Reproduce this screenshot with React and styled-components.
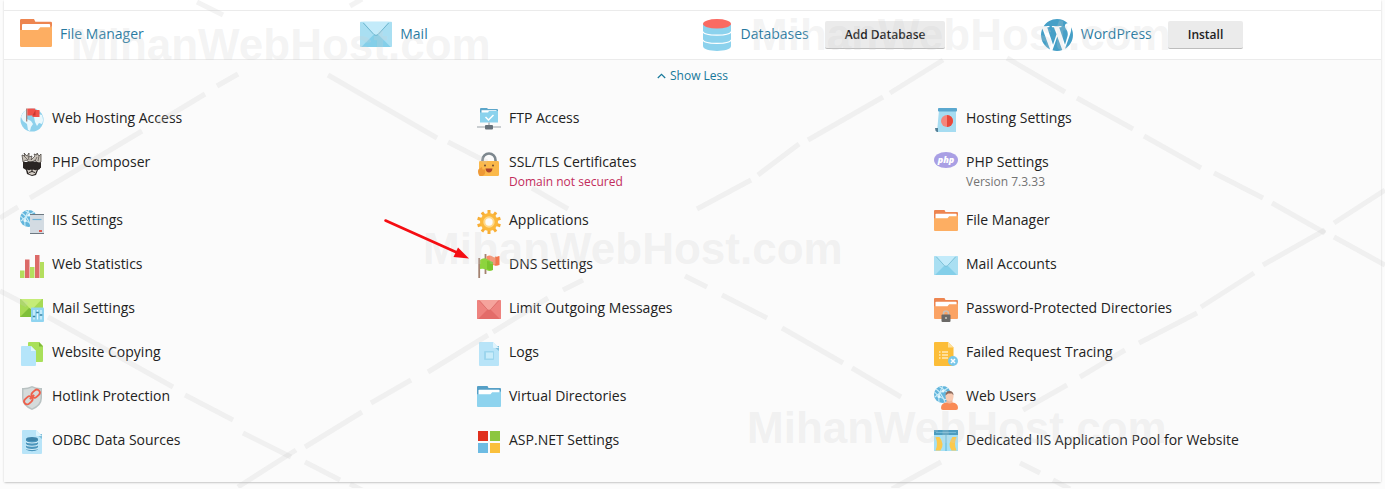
import React, { useState } from 'react'
import styled, { createGlobalStyle } from 'styled-components'

const GlobalStyle = createGlobalStyle`
    * {
        box-sizing: border-box;
    }

    body {
        margin: 0;
        background: #fcfcfc;
        color: #222;
        font-family: "Open Sans", "Noto Sans", sans-serif;
        font-size: 14px;
        line-height: 20px;
    }
`;

const Page = styled.main`
    position: relative;
    padding: 0 4px 6px;
    overflow: hidden;
`;

const Card = styled.section`
    padding-top: 10px;
    background: #fff;
    border-radius: 0 0 2px 2px;
    box-shadow: 0 1px 2px rgba(0, 0, 0, 0.22);
`;

const Toolbar = styled.div`
    display: grid;
    grid-template-columns: repeat(4, 1fr);
    column-gap: 16px;
    padding: 8px 16px;
    border-top: 1px solid #ebebeb;
    border-bottom: 1px solid #ebebeb;
`;

const ToolbarItem = styled.div`
    display: flex;
    align-items: center;
    gap: 16px;
    white-space: nowrap;
`;

const ToolbarLink = styled.a`
    display: flex;
    align-items: center;
    gap: 8px;
    color: #28799f;
    text-decoration: none;
`;

const ToolbarText = styled.span`
    padding-bottom: 2px;
`;

const ToolButton = styled.button`
    height: 28px;
    padding: 0 20px;
    border: 0;
    border-bottom: 1px solid #bdbdbd;
    border-radius: 2px;
    background: #ebebeb;
    color: #222;
    font: 600 12px "Open Sans", sans-serif;
`;

const Panel = styled.div`
    padding: 6px 16px 28px;
    background: #fbfbfb;
`;

const ToggleButton = styled.button`
    display: flex;
    align-items: center;
    gap: 4px;
    margin: 0 auto;
    padding: 0;
    border: 0;
    background: none;
    color: #16789a;
    font: 12px/20px "Open Sans", sans-serif;
`;

const Tools = styled.div`
    display: grid;
    grid-template-columns: repeat(3, 1fr);
    gap: 20px 26px;
    margin-top: 22px;
`;

const Tool = styled.a`
    display: flex;
    align-items: flex-start;
    gap: 8px;
    color: #222;
    text-decoration: none;
`;

const ToolTitle = styled.span`
    display: block;
`;

const ToolNote = styled.span`
    display: block;
    padding-top: 1px;
    font-size: 12px;
    line-height: 17px;
    color: ${(props) => (props.$danger ? '#c22c5c' : '#737373')};
`;

const IconSvg = styled.svg`
    display: block;
    flex: none;
`;

const Overlay = styled.svg`
    position: absolute;
    top: 0;
    left: 0;
    pointer-events: none;
`;

const Icon = ({ size = 24, children }) => (
    <IconSvg width={size} height={size} viewBox="0 0 24 24" aria-hidden="true">{children}</IconSvg>
)

const Folder = ({ size, back = '#ed8550', front = '#fdae62', children }) => (
    <Icon size={size}>
        <path d="M0 1q0-1 1-1h9.500l1 2H23q1 0 1 1v9H0z" fill={back} />
        <path d="M1.500 4.500q0-.8.800-.8h19.500q.8 0 .8.800V9H1.500z" fill="#fff" />
        <path d="M0 8.200h13.500l1.700-2H23l1-1.200v15q0 1-1 1H1q-1 0-1-1z" fill={front} />
        {children}
    </Icon>
)

const Envelope = ({ size, base = '#a9dff2', flap = '#c3ebfa', low = '#84cfe9', line = '#6db4cb', children }) => (
    <Icon size={size}>
        <rect y="2" width="24" height="19" rx=".6" fill={base} />
        <path d="M1 21l9-9h4l9 9z" fill={low} />
        <path d="M2.500 2h19l-8 9.500q-1.500 1.300-3 0z" fill={flap} />
        <path d="M2.500 3l8 8.700q1.500 1.200 3 0l8-8.700" fill="none" stroke={line} strokeWidth=".7" />
        {children}
    </Icon>
)

const Globe = () => (
    <>
        <circle cx="12" cy="12" r="11.500" fill="#8dd1ec" />
        <path d="M1 9q2-6 7-8l3 1-1 4-4 2 1 3 4 2 2 3-2 3-1 4-2-1-1-6-4-3z" fill="#eaf8fd" />
        <path d="M14 9l4-3 4 1q2 5 0 9l-3-1-2 3-2-4z" fill="#eaf8fd" />
    </>
)

const WireGlobe = () => (
    <>
        <circle cx="8.500" cy="8.500" r="8.500" fill="#62b5dc" />
        <path d="M2 3q5 3 9 13M14 2q-8 4-13 9M5 .5q8 4 11.500 11M.5 6q6 7 14 8M9 0q-5 8-4 16" fill="none" stroke="#c9ecf8" strokeWidth="1.100" />
        <circle cx="9" cy="5" r="1.600" fill="#e6f7fd" />
        <circle cx="5" cy="10.500" r="1.600" fill="#e6f7fd" />
    </>
)

const Sheet = ({ fill = '#b8e4f8', fold = '#7fbfdb', children }) => (
    <Icon>
        <path d="M2 1q0-1 1-1h13l6 6v17q0 1-1 1H3q-1 0-1-1z" fill={fill} />
        <path d="M16 4h6v5z" fill={fold} />
        <path d="M16 0l6 6h-5q-1 0-1-1z" fill="#dff4fd" />
        {children}
    </Icon>
)

const DatabaseIcon = ({ size }) => (
    <IconSvg width={size} height={size} viewBox="0 0 32 32" aria-hidden="true">
        <path d="M2 5v22c0 6.500 28 6.500 28 0V5z" fill="#8cd2ed" />
        <ellipse cx="16" cy="4.800" rx="14" ry="4.800" fill="#fa6a62" />
        <path d="M2 12.500c0 4.800 28 4.800 28 0M2 20.800c0 4.800 28 4.800 28 0" fill="none" stroke="#fff" strokeWidth="1.100" />
    </IconSvg>
)

const WordPressIcon = ({ size }) => (
    <IconSvg width={size} height={size} viewBox="43 43 426 426" fill="#459fc7" aria-hidden="true">
        <path d="M61.700 169.400l101.500 278C92.200 413 43.300 340.200 43.300 256c0-30.900 6.600-60.100 18.400-86.600z" />
        <path d="M399.600 245.300c0-26.300-9.400-44.500-17.500-58.700-10.800-17.500-20.900-32.400-20.900-49.900 0-19.600 14.800-37.800 35.700-37.800.9 0 1.800.1 2.800.2-37.900-34.700-88.300-55.900-143.700-55.900-74.300 0-139.700 38.100-177.800 95.900 5 .2 9.700.3 13.700.3 22.200 0 56.700-2.700 56.700-2.700 11.500-.7 12.800 16.200 1.400 17.500 0 0-11.500 1.300-24.300 2l77.500 230.400L249.800 247l-33.100-90.800c-11.500-.7-22.300-2-22.300-2-11.500-.7-10.100-18.200 1.300-17.500 0 0 35.100 2.700 56 2.700 22.200 0 56.700-2.700 56.700-2.700 11.500-.7 12.800 16.200 1.400 17.500 0 0-11.500 1.300-24.300 2l76.900 228.700 21.200-70.900c9-29.400 16-50.500 16-68.700z" />
        <path d="M259.700 274.600l-63.800 185.500c19.100 5.600 39.200 8.700 60.100 8.700 24.800 0 48.500-4.300 70.600-12.100-.6-.9-1.100-1.900-1.500-2.900z" />
        <path d="M442.700 153.900c.9 6.800 1.400 14 1.400 21.900 0 21.600-4 45.800-16.200 76.200l-65 187.900C426.200 403 468.700 334.500 468.700 256c0-37-9.400-71.800-26-102.100z" />
    </IconSvg>
)

const WebAccessIcon = () => (
    <Icon>
        <Globe />
        <path d="M6.700.5v13" stroke="#9c7d75" strokeWidth="1.200" />
        <path d="M7.300.5h8v1.500h4.200v7h-7V7.500H7.300z" fill="#f0524a" />
        <path d="M12.500 7.500h3V2z" fill="#c93831" />
    </Icon>
)

const FtpIcon = () => (
    <Icon>
        <path d="M3 1q0-1 1-1h6l1 1h9q1 0 1 1v6H3z" fill="#5ca6ca" />
        <path d="M4.500 2.200h15V7h-15z" fill="#fff" />
        <path d="M3 4.500h8l1-1.500h9v11.500H3z" fill="#8bd2ed" />
        <path d="M8.500 9l3 3 5-5" fill="none" stroke="#fff" strokeWidth="1.500" />
        <path d="M12 14.500v3M0 19h24" stroke="#9aa2a8" strokeWidth="1.200" />
        <rect x="8" y="17" width="8" height="4.500" rx="1" fill="#66717a" />
    </Icon>
)

const HostingIcon = () => (
    <Icon>
        <path d="M5 2h17v22H3z" fill="#a6dcf1" />
        <rect x="4" width="19" height="3.500" rx=".8" fill="#5ba8cf" />
        <path d="M1 20h3v4H3q-2-1-2-4z" fill="#547f95" />
        <circle cx="13" cy="13" r="6" fill="#f5857b" />
        <path d="M13 7a6 6 0 0 1 0 12z" fill="#e8483b" />
    </Icon>
)

const ComposerIcon = () => (
    <Icon>
        <path d="M3 10h18l-1 7-2 1-2 5-4 1-5-2-1-4-3-2z" fill="#2a2523" />
        <path d="M2 3l3 1-1-3 3 3 2-3v4l3-1-1 4 4-4-1-2 3 1V1l2 3 2-2v8l-3 2-3-4-4 3-5-3-3 2z" fill="#c9c3ba" stroke="#3a332f" strokeWidth=".7" />
        <path d="M4 4l4 4M17 5l-2 4M19 4l-1 5M8 4l1 4" stroke="#3a332f" strokeWidth=".6" />
        <path d="M3 11q9-3.500 18 0v5q-9-2-18 0z" fill="#2a2523" />
        <path d="M7 17.500q2 1.500 4 0l1 1 1-1q3 1.500 4 0l-2 4.500-3 1-3-1z" fill="#d8d2ca" />
        <path d="M9 20.500q3-2 6 0M12 18v2" stroke="#2a2523" fill="none" />
    </Icon>
)

const LockIcon = () => (
    <Icon>
        <path d="M5.500 11V8a6.500 6.500 0 0 1 13 0v3" fill="none" stroke="#7d878e" strokeWidth="2.600" />
        <rect x="2" y="9" width="20" height="15" rx="1.200" fill="#fbb94b" />
        <circle cx="8" cy="13.500" r="1" fill="#6d4b35" />
        <circle cx="16" cy="13.500" r="1" fill="#6d4b35" />
        <path d="M8.500 16.500h7q-.5 4-3.500 4t-3.500-4z" fill="#a9442c" />
        <path d="M1 19q0-2 1.500-2.500L5 15l.5 2.500H8q1 5-2.500 6.500H3q-2-1-2-5z" fill="#ee9936" />
    </Icon>
)

const PhpIcon = () => (
    <Icon>
        <ellipse cx="12" cy="8" rx="12" ry="8" fill="#a99fe4" />
        <text x="12" y="10.500" textAnchor="middle" fontFamily="Open Sans, sans-serif" fontSize="9" fontWeight="800" fontStyle="italic" fill="#fff">php</text>
    </Icon>
)

const IisIcon = () => (
    <Icon>
        <WireGlobe />
        <rect x="10" y="4" width="14" height="20" rx=".6" fill="#d3dbe2" />
        <path d="M10 4.500h14M10 23.500h14" stroke="#6e7982" />
        <path d="M12.500 9.500h9" stroke="#71b3d8" strokeWidth="1.200" />
        <rect x="19" y="20" width="3" height="2" fill="#e4594f" />
    </Icon>
)

const GearIcon = () => (
    <Icon>
        {[0, 36, 72, 108, 144].map((angle) => (
            <path key={angle} d="M12 0v24" stroke="#f8ae35" strokeWidth="3" transform={`rotate(${angle} 12 12)`} />
        ))}
        <circle cx="12" cy="12" r="9" fill="#fbb83c" />
        <circle cx="12" cy="12" r="4.700" fill="#fbfbfb" stroke="#ffd98c" strokeWidth="2" />
    </Icon>
)

const StatsIcon = () => (
    <Icon>
        <path d="M0 16.500h4.500V24H0zM10 13h4.500v11H10zM20 8h4v16h-4z" fill="#b4de5e" />
        <path d="M5 5.500h4.500V24H5zM15 1h4.500v23H15z" fill="#dc6a68" />
    </Icon>
)

const DnsIcon = () => (
    <Icon>
        <path d="M8.500 0v20M2.200 4v20" stroke="#a38270" strokeWidth="1.800" />
        <path d="M9.500 2.500q3-2 6 0t6.500-.5v9q-3 1.500-6 0t-6.500 0z" fill="#fa8d68" />
        <path d="M18 2.500q3 .5 4.500-.5v9l-4.500.5z" fill="#f4754d" />
        <path d="M3 6q3.500-3 7-1l5.500 3v8q-3 2-6 0t-6.500-1z" fill="#8dd43e" />
        <path d="M10 7l6 1v8q-3 1-6-1z" fill="#79c52d" />
    </Icon>
)

const MailSettingsIcon = () => (
    <Icon>
        <path d="M0 1h23v18H0z" fill="#a6da54" />
        <path d="M0 19L9 10h5l9 9z" fill="#7fbf3a" />
        <path d="M1 1h21l-9 9.500q-1.500 1-3 0z" fill="#c5ec78" />
        <rect x="11" y="9.500" width="13" height="14.500" rx="1" fill="#8fd4f0" />
        <path d="M14 12v9.500M17.500 12v9.500M21 12v9.500" stroke="#e6f8ff" strokeWidth="1.200" />
        <path d="M12.800 18.500h2.500M16.200 14.500h2.600M19.700 17h2.600" stroke="#3b83a5" strokeWidth="1.700" />
    </Icon>
)

const CopyIcon = () => (
    <Icon>
        <path d="M8 1q0-1 1-1h10l4 4v15q0 1-1 1H8z" fill="#a9e05a" />
        <path d="M19 0l4 4.500h-4z" fill="#7fb83a" />
        <path d="M1 5q0-1 1-1h9l5 5v14q0 1-1 1H2q-1 0-1-1z" fill="#b5e5fa" />
        <path d="M11 4l5 5h-5z" fill="#e2f6fe" />
    </Icon>
)

const HotlinkIcon = () => (
    <Icon>
        <path d="M12 0q5 2.500 10 2v10q0 8-10 12Q2 20 2 12V2q5 .5 10-2z" fill="#b9c2c2" />
        <path d="M12 1.500q4 2 8.500 2V12q0 6.500-8.500 10.500Q3.500 18.500 3.500 12V3.500q4.500 0 8.500-2z" fill="#d5dbdb" />
        <g transform="rotate(-42 12 11)" fill="none" stroke="#ee604c" strokeWidth="1.800">
            <rect x="2.500" y="8" width="9" height="6" rx="3" />
            <rect x="12.500" y="8" width="9" height="6" rx="3" />
            <path d="M9 11h6" />
        </g>
    </Icon>
)

const LogsIcon = () => (
    <Sheet>
        <rect x="7" y="9" width="10" height="9" rx="1" fill="#9dd6ee" />
        <rect x="9" y="10.500" width="7" height="6" fill="#c8ecfa" />
    </Sheet>
)

const OdbcIcon = () => (
    <Sheet>
        <path d="M6 9v9.500c0 3.500 12 3.500 12 0V9z" fill="#4b96bd" />
        <ellipse cx="12" cy="9" rx="6" ry="2" fill="#3d83a9" />
        <path d="M6 11c0 2.600 12 2.600 12 0M6 14.300c0 2.600 12 2.600 12 0M6 17.500c0 2.600 12 2.600 12 0" fill="none" stroke="#d4effa" strokeWidth="1.100" />
    </Sheet>
)

const AspIcon = () => (
    <Icon>
        <path d="M1 1h10v10H1z" fill="#e0301e" />
        <path d="M13 1h10v10H13z" fill="#8cc63f" />
        <path d="M1 13h10v10H1z" fill="#6dbbe3" />
        <path d="M13 13h10v10H13z" fill="#fac03c" />
    </Icon>
)

const ProtectedFolderIcon = () => (
    <Folder front="#fba364">
        <path d="M9.500 18v-2.500a2.500 2.500 0 0 1 5 0V18" fill="none" stroke="#c6c0ba" strokeWidth="1.600" />
        <rect x="7.500" y="16.500" width="9" height="7.500" rx="1" fill="#6b6967" />
        <circle cx="12" cy="20" r="1.100" fill="#c6c0ba" />
    </Folder>
)

const TracingIcon = () => (
    <Icon>
        <path d="M0 1q0-1 1-1h13l5.500 5.500V23q0 1-1 1H1q-1 0-1-1z" fill="#fcbd38" />
        <path d="M14 0l5.500 5.500H14z" fill="#ffe09a" />
        <path d="M5 10h1.500M8 10h6M5 13h1.500M8 13h6M5 16h1.500M8 16h6" stroke="#ffe9b8" strokeWidth="1.300" />
        <circle cx="19" cy="19" r="5" fill="#79c7ea" />
        <path d="M17 17l4 4M21 17l-4 4" stroke="#fff" strokeWidth="1.500" />
    </Icon>
)

const WebUsersIcon = () => (
    <Icon>
        <WireGlobe />
        <path d="M12.500 13h6v6h-6z" fill="#efb79c" />
        <ellipse cx="15.500" cy="10.500" rx="4" ry="5" fill="#f9cbb3" />
        <path d="M11.500 9.500q0-4.500 4-4.500t4 4.500L18 7.500h-4z" fill="#8b6a5c" />
        <path d="M7 22q0-5 5.500-5.500 3 2 6 0Q24 17 24 22q0 2-2 2H9q-2 0-2-2z" fill="#f98a55" />
    </Icon>
)

const PoolIcon = () => (
    <Icon>
        <path d="M0 0h24v21H0z" fill="#a6e0f4" />
        <path d="M0 0h24v5H0z" fill="#4c9cc0" />
        <path d="M2 2.500h20" stroke="#76bbd8" />
        <path d="M1.500 7h4q5.500 7 1 13.500h-5q3-6 0-13.500zM22.500 7h-4q-5.500 7-1 13.500h5q-3-6 0-13.500z" fill="#fbc94d" />
        <path d="M12 5v16" stroke="#5fb6d6" />
    </Icon>
)

const RedEnvelope = () => <Envelope base="#ee837f" flap="#f5a39c" low="#e36c69" line="#d66866" />

const tools = [
    { title: 'Web Hosting Access', icon: WebAccessIcon },
    { title: 'FTP Access', icon: FtpIcon },
    { title: 'Hosting Settings', icon: HostingIcon },
    { title: 'PHP Composer', icon: ComposerIcon },
    { title: 'SSL/TLS Certificates', icon: LockIcon, note: 'Domain not secured', danger: true },
    { title: 'PHP Settings', icon: PhpIcon, note: 'Version 7.3.33' },
    { title: 'IIS Settings', icon: IisIcon },
    { title: 'Applications', icon: GearIcon },
    { title: 'File Manager', icon: Folder },
    { title: 'Web Statistics', icon: StatsIcon },
    { title: 'DNS Settings', icon: DnsIcon },
    { title: 'Mail Accounts', icon: Envelope },
    { title: 'Mail Settings', icon: MailSettingsIcon },
    { title: 'Limit Outgoing Messages', icon: RedEnvelope },
    { title: 'Password-Protected Directories', icon: ProtectedFolderIcon },
    { title: 'Website Copying', icon: CopyIcon },
    { title: 'Logs', icon: LogsIcon },
    { title: 'Failed Request Tracing', icon: TracingIcon },
    { title: 'Hotlink Protection', icon: HotlinkIcon },
    { title: 'Virtual Directories', icon: () => <Folder back="#559fc6" front="#8ed3ee" /> },
    { title: 'Web Users', icon: WebUsersIcon },
    { title: 'ODBC Data Sources', icon: OdbcIcon },
    { title: 'ASP.NET Settings', icon: AspIcon },
    { title: 'Dedicated IIS Application Pool for Website', icon: PoolIcon },
]

const marks = [[71, 60], [751, 50], [423, 264], [747, 443]]

// x1 y1 x2 y2 of every dash of the watermark net
const dashes = [
    [197, 2, 223, 15], [350, 6, 362, -1],
    [238, 74, 217, 86], [205, 94, 157, 123], [142, 131, 30, 198], [18, 207, 0, 218],
    [328, 75, 437, 138], [448, 142, 487, 162], [532, 188, 568, 209],
    [685, 276, 707, 287], [722, 295, 767, 318], [782, 328, 843, 363], [852, 368, 901, 397],
    [1020, 463, 1040, 473], [1053, 480, 1070, 489],
    [943, 60, 890, 93], [883, 97, 808, 140], [799, 144, 758, 175], [751, 180, 697, 209],
    [1007, 58, 1065, 92], [1077, 98, 1133, 129], [1144, 136, 1201, 168], [1214, 173, 1263, 198],
    [1272, 203, 1325, 233], [1334, 237, 1385, 265],
    [1385, 190, 1334, 223], [1325, 230, 1263, 265], [1254, 273, 1201, 307], [1197, 313, 1139, 343],
    [1125, 350, 1080, 377], [1067, 385, 1023, 410], [941, 462, 892, 489],
    [583, 280, 563, 290], [548, 298, 493, 332], [488, 335, 428, 372], [411, 380, 371, 403],
    [362, 412, 305, 447], [296, 450, 238, 487],
    [0, 291, 27, 305], [48, 317, 173, 387], [185, 395, 233, 420], [243, 433, 291, 457],
    [305, 462, 340, 480], [350, 484, 362, 490],
]

const Watermark = () => (
    <Overlay width="1385" height="489" aria-hidden="true">
        <g stroke="#c8c8c8" strokeOpacity=".22" strokeWidth="5">
            {dashes.map(([x1, y1, x2, y2], index) => (
                <line key={index} x1={x1} y1={y1} x2={x2} y2={y2} />
            ))}
        </g>
        <g fill="#d0d0d0" fillOpacity=".24" fontFamily="Liberation Sans, Arial, sans-serif" fontSize="44" fontWeight="700">
            {marks.map(([x, y]) => (
                <text key={x} x={x} y={y}>MihanWebHost.com</text>
            ))}
        </g>
        <path d="M385.500 220.500L458 253" stroke="#f50d12" strokeWidth="2.600" strokeLinecap="round" />
        <path d="M469 258.500l-15.500-1.500 4.500-9.500z" fill="#f50d12" />
    </Overlay>
)

const App = () => {

    const [expanded, setExpanded] = useState(true);

    return (
        <>
            <GlobalStyle />
            <Page>
                <Card>
                    <Toolbar>
                        <ToolbarItem>
                            <ToolbarLink href="#files"><Folder size={32} /><ToolbarText>File Manager</ToolbarText></ToolbarLink>
                        </ToolbarItem>
                        <ToolbarItem>
                            <ToolbarLink href="#mail"><Envelope size={32} /><ToolbarText>Mail</ToolbarText></ToolbarLink>
                        </ToolbarItem>
                        <ToolbarItem>
                            <ToolbarLink href="#databases"><DatabaseIcon size={32} /><ToolbarText>Databases</ToolbarText></ToolbarLink>
                            <ToolButton type="button">Add Database</ToolButton>
                        </ToolbarItem>
                        <ToolbarItem>
                            <ToolbarLink href="#wordpress"><WordPressIcon size={32} /><ToolbarText>WordPress</ToolbarText></ToolbarLink>
                            <ToolButton type="button">Install</ToolButton>
                        </ToolbarItem>
                    </Toolbar>
                    <Panel>
                        <ToggleButton type="button" aria-expanded={expanded} onClick={() => setExpanded(!expanded)}>
                            <IconSvg width="9" height="6" viewBox="0 0 9 6" aria-hidden="true">
                                <path d={expanded ? 'M.8 5l3.700-3.700L8.200 5' : 'M.8 1l3.700 3.700L8.200 1'} fill="none" stroke="currentColor" strokeWidth="1.200" />
                            </IconSvg>
                            {expanded ? 'Show Less' : 'Show More'}
                        </ToggleButton>
                        {
                            expanded && (
                                <Tools>
                                    {tools.map((item) => (
                                        <Tool key={item.title} href="#tool">
                                            <item.icon />
                                            <span>
                                                <ToolTitle>{item.title}</ToolTitle>
                                                {item.note && <ToolNote $danger={item.danger}>{item.note}</ToolNote>}
                                            </span>
                                        </Tool>
                                    ))}
                                </Tools>
                            )
                        }
                    </Panel>
                </Card>
                <Watermark />
            </Page>
        </>
    )
}

export default App
